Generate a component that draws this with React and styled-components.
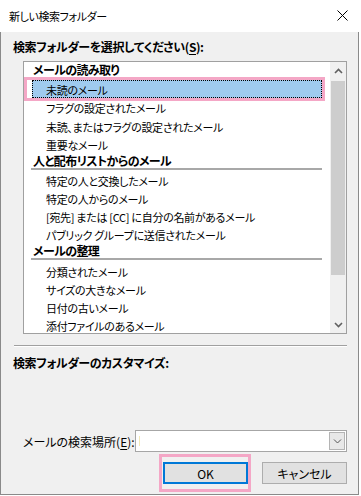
import React from "react";
import styled, { createGlobalStyle } from "styled-components";

const GlobalStyle = createGlobalStyle`
  html, body {
    margin: 0;
    padding: 0;
    background: #ffffff;
  }
  body {
    font-family: "Noto Sans CJK JP", "Noto Sans", sans-serif;
    font-feature-settings: "palt";
    color: #000;
    font-size: 12px;
  }
`;

const sections = [
  {
    title: "メールの読み取り",
    items: [
      "未読のメール",
      "フラグの設定されたメール",
      "未読、またはフラグの設定されたメール",
      "重要なメール",
    ],
  },
  {
    title: "人と配布リストからのメール",
    items: [
      "特定の人と交換したメール",
      "特定の人からのメール",
      "[宛先] または [CC] に自分の名前があるメール",
      "パブリック グループに送信されたメール",
    ],
  },
  {
    title: "メールの整理",
    items: [
      "分類されたメール",
      "サイズの大きなメール",
      "日付の古いメール",
      "添付ファイルのあるメール",
    ],
  },
];

const Window = styled.div`
  width: 359px;
  height: 495px;
  box-sizing: border-box;
  display: flex;
  flex-direction: column;
`;

const TitleBar = styled.div`
  height: 32px;
  background: #ffffff;
  display: flex;
  align-items: center;
  justify-content: space-between;
  padding: 0 11px 1px 9px;
  box-sizing: border-box;
  font-size: 11px;
  letter-spacing: -0.4px;
`;

const Body = styled.div`
  flex: 1;
  background: #f0f0f0;
  border: 1px solid #8a8a8a;
  border-top: none;
  display: flex;
  flex-direction: column;
  padding: 7px 11px 0 12px;
`;

const Label = styled.div`
  font-weight: 700;
  font-size: 12px;
  line-height: 15px;
  letter-spacing: -0.4px;
  margin-top: ${(p) => p.$top || 0}px;
`;

const Mnemonic = styled.span`
  text-decoration: underline;
  text-underline-offset: 2px;
`;

const ListBox = styled.div`
  margin: 7px 0 0 10px;
  height: 273px;
  box-sizing: border-box;
  border: 1px solid #a0a0a0;
  background: #ffffff;
  display: flex;
`;

const ListContent = styled.div`
  flex: 1;
  padding: 0 8px;
`;

const HeaderRow = styled.div`
  height: 18.15px;
  display: flex;
  flex-direction: column;
  font-weight: 700;
  font-size: 12px;
  letter-spacing: -0.6px;
`;

const HeaderText = styled.div`
  line-height: 14px;
  padding: 1px 0 0 1px;
`;

const Rule = styled.div`
  height: 2px;
  margin: 0 0 0 -1px;
  background: ${(p) => (p.$hidden ? "transparent" : "#a8a8a8")};
`;

const ItemRow = styled.div`
  position: relative;
  height: 18.15px;
  box-sizing: border-box;
  display: flex;
  align-items: center;
  padding: 2px 0 0 13px;
  font-size: 11px;
  letter-spacing: -0.3px;
  background: ${(p) => (p.$selected ? "#9fcbef" : "transparent")};
  border: 1px dotted ${(p) => (p.$selected ? "#000" : "transparent")};
`;

const Marker = styled.div`
  position: absolute;
  left: ${(p) => p.$l}px;
  right: ${(p) => p.$r}px;
  top: ${(p) => p.$t}px;
  bottom: ${(p) => p.$b}px;
  border: 3px solid #f4a7c6;
  pointer-events: none;
`;

const ScrollBar = styled.div`
  width: 16px;
  background: #f0f0f0;
  display: flex;
  flex-direction: column;
`;

const ScrollArrow = styled.div`
  height: 17px;
  display: flex;
  align-items: center;
  justify-content: center;
`;

const Thumb = styled.div`
  margin: 2px 1px 41px 1px;
  flex: 1;
  background: #cdcdcd;
`;

const Separator = styled.div`
  margin-top: 11px;
  margin-left: 1px;
  border-top: 1px solid #a0a0a0;
  border-bottom: 1px solid #ffffff;
`;

const SearchRow = styled.div`
  margin-top: 60px;
  margin-left: 10px;
  display: flex;
  align-items: center;
  font-size: 12px;
`;

const Combo = styled.div`
  margin-left: auto;
  width: 212px;
  height: 22px;
  box-sizing: border-box;
  border: 1px solid #a6a6a6;
  background: #ffffff;
  display: flex;
  align-items: center;
  justify-content: space-between;
  padding: 0 1px 0 3px;
`;

const Caret = styled.span`
  width: 1px;
  height: 10px;
  background: #f3e9b8;
`;

const DropButton = styled.div`
  width: 16px;
  height: 18px;
  box-sizing: border-box;
  border: 1px solid #b4b4b4;
  background: #e8e8e8;
  display: flex;
  align-items: center;
  justify-content: center;
`;

const ButtonRow = styled.div`
  margin-top: 10px;
  display: flex;
  justify-content: flex-end;
  gap: 14px;
`;

const Button = styled.div`
  position: relative;
  width: 85px;
  height: 22px;
  box-sizing: border-box;
  border: ${(p) => (p.$default ? "2px solid #0078d7" : "1px solid #adadad")};
  background: #e1e1e1;
  display: flex;
  align-items: center;
  justify-content: center;
  font-size: 12px;
`;

const Chevron = ({ up }) => (
  <svg width="9" height="6" viewBox="0 0 9 6">
    <path
      d={up ? "M1 5 L4.5 1.5 L8 5" : "M1 1 L4.5 4.5 L8 1"}
      fill="none"
      stroke="#606060"
      strokeWidth="1.6"
    />
  </svg>
);

const SmallChevron = () => (
  <svg width="9" height="5" viewBox="0 0 9 5">
    <path d="M1 0.5 L4.5 4 L8 0.5" fill="none" stroke="#555" strokeWidth="1" />
  </svg>
);

const CloseIcon = () => (
  <svg width="11" height="11" viewBox="0 0 11 11">
    <path d="M0.5 0.5 L10.5 10.5 M10.5 0.5 L0.5 10.5" stroke="#000" strokeWidth="1" />
  </svg>
);

export default function App() {
  return (
    <>
      <GlobalStyle />
      <Window>
        <TitleBar>
          <span>新しい検索フォルダー</span>
          <CloseIcon />
        </TitleBar>
        <Body>
          <Label>
            検索フォルダーを選択してください(<Mnemonic>S</Mnemonic>):
          </Label>
          <ListBox>
            <ListContent>
              {sections.map((section, si) => (
                <React.Fragment key={section.title}>
                  <HeaderRow>
                    <HeaderText>{section.title}</HeaderText>
                    <Rule $hidden={si === 0} />
                  </HeaderRow>
                  {section.items.map((item, ii) => {
                    const selected = si === 0 && ii === 0;
                    return (
                      <ItemRow key={item} $selected={selected}>
                        {item}
                        {selected && <Marker $l={-9} $r={-4} $t={-4} $b={-4} />}
                      </ItemRow>
                    );
                  })}
                </React.Fragment>
              ))}
            </ListContent>
            <ScrollBar>
              <ScrollArrow>
                <Chevron up />
              </ScrollArrow>
              <Thumb />
              <ScrollArrow>
                <Chevron />
              </ScrollArrow>
            </ScrollBar>
          </ListBox>
          <Separator />
          <Label $top={8}>検索フォルダーのカスタマイズ:</Label>
          <SearchRow>
            <span>
              メールの検索場所(<Mnemonic>E</Mnemonic>):
            </span>
            <Combo>
              <Caret />
              <DropButton>
                <SmallChevron />
              </DropButton>
            </Combo>
          </SearchRow>
          <ButtonRow>
            <Button $default>
              OK
              <Marker $l={-6} $r={-5} $t={-10} $b={-10} />
            </Button>
            <Button>キャンセル</Button>
          </ButtonRow>
        </Body>
      </Window>
    </>
  );
}
